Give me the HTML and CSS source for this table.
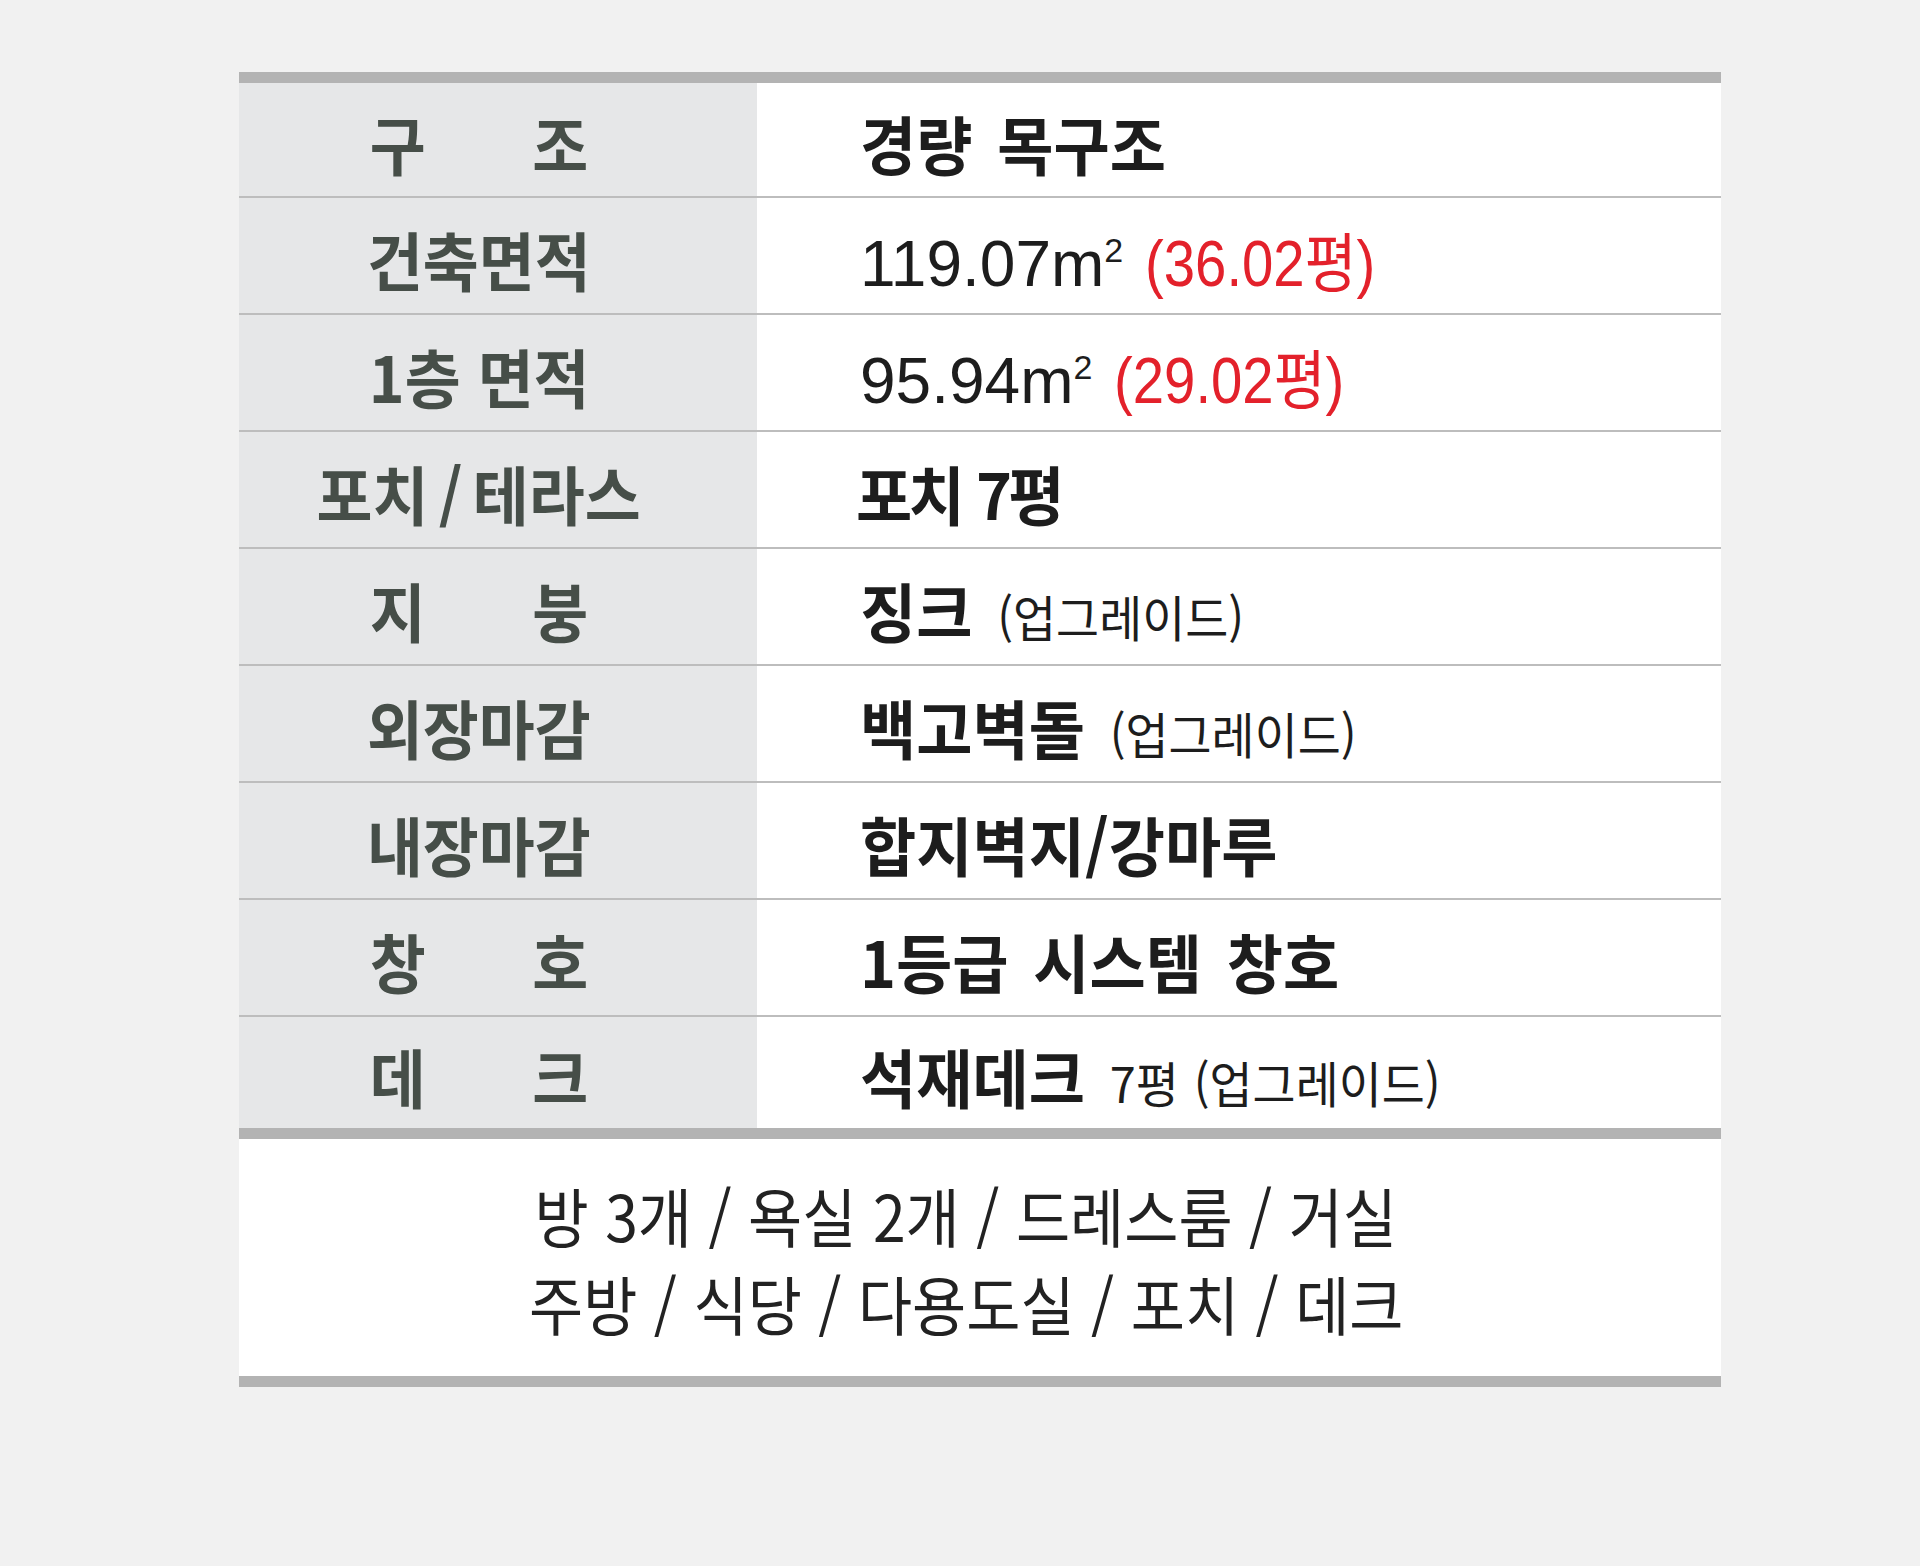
FILE: index.html
```html
<!DOCTYPE html>
<html lang="ko">
<head>
<meta charset="utf-8">
<title>사양</title>
<link rel="stylesheet" href="styles.css">
</head>
<body>
<div class="sheet">
  <div class="spec">
    <div class="row">
      <div class="label"><span class="lbl spread"><span>구</span><span>조</span></span></div>
      <div class="value"><span class="val">경량 목구조</span></div>
    </div>
    <div class="row">
      <div class="label"><span class="lbl">건축면적</span></div>
      <div class="value"><span class="val num">119.07m<span class="sq">2</span> <span class="red">(36.02평)</span></span></div>
    </div>
    <div class="row">
      <div class="label"><span class="lbl">1층 면적</span></div>
      <div class="value"><span class="val num">95.94m<span class="sq">2</span> <span class="red">(29.02평)</span></span></div>
    </div>
    <div class="row">
      <div class="label"><span class="lbl slim">포치 / 테라스</span></div>
      <div class="value"><span class="val tight">포치 7평</span></div>
    </div>
    <div class="row">
      <div class="label"><span class="lbl spread"><span>지</span><span>붕</span></span></div>
      <div class="value"><span class="val">징크 <span class="sub">(업그레이드)</span></span></div>
    </div>
    <div class="row">
      <div class="label"><span class="lbl">외장마감</span></div>
      <div class="value"><span class="val">백고벽돌 <span class="sub">(업그레이드)</span></span></div>
    </div>
    <div class="row">
      <div class="label"><span class="lbl">내장마감</span></div>
      <div class="value"><span class="val">합지벽지/강마루</span></div>
    </div>
    <div class="row">
      <div class="label"><span class="lbl spread"><span>창</span><span>호</span></span></div>
      <div class="value"><span class="val">1등급 시스템 창호</span></div>
    </div>
    <div class="row">
      <div class="label"><span class="lbl spread"><span>데</span><span>크</span></span></div>
      <div class="value"><span class="val">석재데크 <span class="sub">7평 (업그레이드)</span></span></div>
    </div>
  </div>
  <div class="rooms">
    <span class="rooms-line">방 3개 / 욕실 2개 / 드레스룸 / 거실</span>
    <span class="rooms-line">주방 / 식당 / 다용도실 / 포치 / 데크</span>
  </div>
</div>
</body>
</html>
```
FILE: styles.css
```css
* { box-sizing: border-box; }

body {
  margin: 0;
  background: #f1f1f1;
  font-family: "Noto Sans CJK KR", "Noto Sans", sans-serif;
}

.sheet {
  width: 1482px;
  margin: 72px 0 0 239px;
}

.spec {
  background: #ffffff;
  border-top: 11px solid #b3b3b3;
  border-bottom: 11px solid #b3b3b3;
}

.row {
  display: grid;
  grid-template-columns: 518px 1fr;
  height: 117px;
  border-top: 2px solid #bdbdbd;
}

.row:first-child {
  height: 113px;
  border-top: 0;
}

.row:last-child {
  height: 113px;
}

.label {
  background: #e6e7e8;
  display: flex;
  align-items: center;
  justify-content: center;
  padding: 4px 38px 0 0;
}

.value {
  display: flex;
  align-items: center;
  padding: 4px 0 0 103px;
}

.lbl {
  display: inline-block;
  font-size: 64px;
  font-weight: 700;
  line-height: 1;
  color: #464e48;
  white-space: nowrap;
  transform: scaleX(0.95);
}

.lbl.slim {
  word-spacing: -7px;
}

.spread {
  display: flex;
  justify-content: space-between;
  width: 230px;
}

.val {
  display: inline-block;
  font-size: 64px;
  font-weight: 700;
  line-height: 1;
  color: #1d1d1d;
  white-space: nowrap;
  word-spacing: 8px;
  transform: scaleX(0.955);
  transform-origin: left center;
}

.val.tight {
  letter-spacing: -4px;
  word-spacing: 2px;
  margin-left: -4px;
}

.val .sub {
  font-size: 49px;
  font-weight: 400;
  word-spacing: 2px;
}

.val.num {
  font-family: "Liberation Sans", "Noto Sans CJK KR", sans-serif;
  font-weight: 400;
  word-spacing: 4px;
  margin-top: 12px;
  transform: none;
}

.sq {
  font-size: 34px;
  vertical-align: 24px;
}

.red {
  display: inline-block;
  color: #e3212b;
  transform: scaleX(0.88);
  transform-origin: left center;
}

.rooms {
  height: 248px;
  background: #ffffff;
  border-bottom: 11px solid #b3b3b3;
  display: flex;
  flex-direction: column;
  align-items: center;
  justify-content: center;
  padding-right: 28px;
}

.rooms-line {
  display: block;
  font-size: 64px;
  line-height: 88px;
  color: #222222;
  white-space: nowrap;
  transform: scaleX(0.92);
}
```
